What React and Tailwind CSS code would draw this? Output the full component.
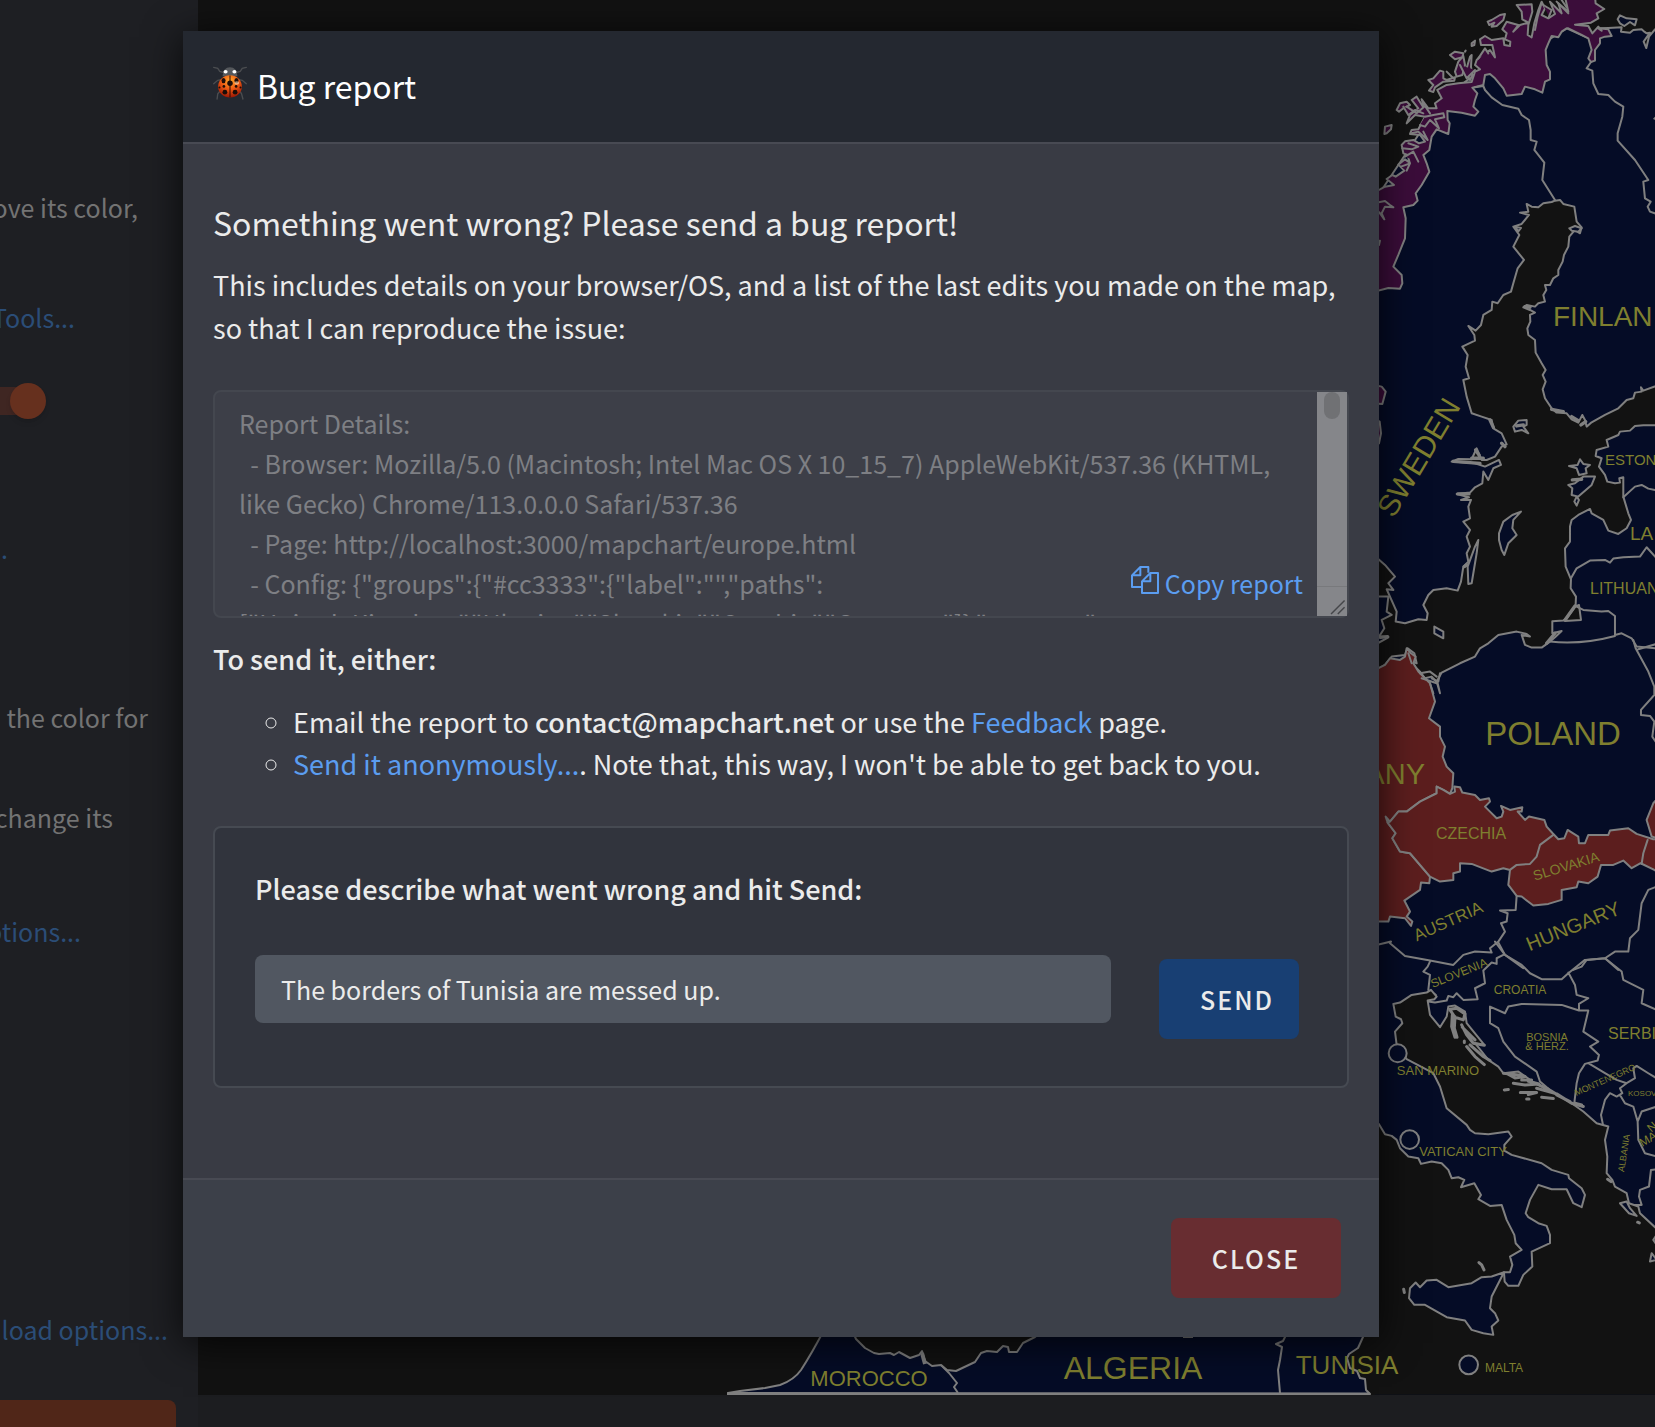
// src/components/BugReportPage.jsx

import React, { useState } from "react";

const report = `Report Details:
  - Browser: Mozilla/5.0 (Macintosh; Intel Mac OS X 10_15_7) AppleWebKit/537.36 (KHTML, like Gecko) Chrome/113.0.0.0 Safari/537.36
  - Page: http://localhost:3000/mapchart/europe.html
  - Config: {"groups":{"#cc3333":{"label":"","paths":
["United_Kingdom","Ukraine","Slovakia","Czechia","Germany"]},"#660066":
{"label":"","paths":["Norway"]}},"title":"","hidden":[],"background":"#242424"}`;

// cx / cy are the centre of the word
const labels = [
  { text: "SWEDEN", cx: 1418, cy: 457, size: 30, rotate: -59 },
  { text: "POLAND", cx: 1553, cy: 733, size: 33 },
  { text: "CZECHIA", cx: 1471, cy: 833, size: 16 },
  { text: "SLOVAKIA", cx: 1566, cy: 866, size: 14, rotate: -17 },
  { text: "AUSTRIA", cx: 1448, cy: 921, size: 17, rotate: -24 },
  { text: "HUNGARY", cx: 1573, cy: 926, size: 20, rotate: -22 },
  { text: "SLOVENIA", cx: 1459, cy: 973, size: 12, rotate: -22 },
  { text: "CROATIA", cx: 1520, cy: 990, size: 12 },
  { text: "BOSNIA", cx: 1547, cy: 1037, size: 11 },
  { text: "& HERZ.", cx: 1547, cy: 1046, size: 11 },
  { text: "SAN MARINO", cx: 1438, cy: 1070, size: 13 },
  { text: "MONTENEGRO", cx: 1605, cy: 1080, size: 9, rotate: -24 },
  { text: "ALBANIA", cx: 1624, cy: 1153, size: 9, rotate: -81 },
  { text: "VATICAN CITY", cx: 1463, cy: 1151, size: 13 },
  { text: "N", cx: 1652, cy: 1127, size: 12, rotate: -40 },
  { text: "MA", cx: 1648, cy: 1139, size: 12, rotate: -30 },
  { text: "MALTA", cx: 1504, cy: 1368, size: 12 },
  { text: "MOROCCO", cx: 869, cy: 1378, size: 22 },
  { text: "ALGERIA", cx: 1133, cy: 1367, size: 32 },
  { text: "TUNISIA", cx: 1347, cy: 1365, size: 26 },
  { text: "FINLAN", cx: 1553, cy: 316, size: 28, anchor: "start" },
  { text: "ESTON", cx: 1605, cy: 460, size: 15, anchor: "start" },
  { text: "LA", cx: 1630, cy: 533, size: 19, anchor: "start" },
  { text: "LITHUAN", cx: 1590, cy: 588, size: 16, anchor: "start" },
  { text: "SERBI", cx: 1608, cy: 1033, size: 16, anchor: "start" },
  { text: "KOSOV", cx: 1628, cy: 1093, size: 8, anchor: "start" },
  { text: "ANY", cx: 1425, cy: 774, size: 29, anchor: "end" },
];

const SEA = "#121212";
const LAND = "#050c26";
const RED = "#5c1e1e";
const PURPLE = "#3b0d3a";

function EuropeMap() {
  return (
    <svg
      viewBox="198 0 1457 1395"
      preserveAspectRatio="xMinYMin slice"
      className="block w-full"
      role="img"
      aria-label="Map of Europe"
    >
      <defs>
        <clipPath id="mainland">
          <rect width="860" height="4185" />
        </clipPath>
      </defs>
      <rect x="198" width="1457" height="1395" fill={SEA} />

      {/* Europe, drawn on a grid three times finer than the page */}
      <g
        transform="translate(1375 0) scale(.3333)"
        clipPath="url(#mainland)"
        stroke="#808080"
        strokeWidth="6"
        strokeLinejoin="round"
        strokeLinecap="round"
        fill="none"
      >
        <path
          fill={LAND}
          d="M-20 873 0 600 200 300 330 200 520 120 575 85 655 120 672 85 700 84 740 82 738 95 765 98 775 90 800 88 808 95 815 100 825 98 806 125 814 144 822 110 840 88 870 84 870 4300-20 4300Z"
        />
        <path
          fill={PURPLE}
          d="M-10 580 15 568 30 560 57 555 35 537 52 525 62 530 88 512 70 494 90 478 104 488 98 465 85 460 80 435 90 424 115 420 132 430 150 425 135 405 105 402 110 390 130 388 150 350 120 345 95 370 105 345 130 325 110 300 125 290 150 330 140 298 160 325 185 325 180 310 200 295 187 270 215 255 250 250 290 246 300 215 315 208 300 195 305 180 320 165 345 150 360 172 352 135 318 135 315 118 330 108 350 120 385 115 388 135 405 138 406 125 390 118 395 100 382 88 395 65 430 75 415 95 435 75 460 68 442 58 440 35 425 15 470 13 472 35 460 75 458 105 470 112 478 70 490 30 500 5 510 25 500 45 520 55 540 42 525 5 560 40 550 10 580 35 570-10 660-10 662 10 688 27 665 40 670 55 648 68 600 74 640 78 652 100 670 80 680 92 670 85 700 88 710 108 690 110 675 115 675 130 660 150 660 182 648 186 640 175 650 150 640 115 620 105 580 85 575 85 560 95 550 112 530 108 520 130 512 150 515 195 525 215 525 238 510 245 502 278 480 268 450 260 440 282 395 287 385 265 360 235 345 222 330 225 325 255 292 263 307 280 300 300 295 320 310 335 300 347 260 338 217 333 218 360 224 370 220 402 185 388 170 410 163 450 145 465 155 490 163 515 140 555 122 580 128 602 115 615 85 622 92 655 90 715 70 765 55 800 80 825 82 850 75 866 40 864-10 877Z"
        />

        {/* fjords and islands of Norway */}
        <g fill={PURPLE}>
          <path d="M338 65 350 60 375 45 390 42 385 60 365 78 350 80 358 68 343 75ZM290 130 300 122 298 135 290 138ZM225 165 240 155 265 160 262 172 240 178ZM240 215 250 185 265 168 270 195 262 225 245 230ZM272 215 285 170 290 165 288 200 292 225 285 240ZM160 240 175 235 195 212 205 215 205 235 215 240 240 232 238 242 205 245 180 262 175 276 162 272 175 255ZM65 330 75 310 95 305 105 315 85 325 72 335ZM28 402 30 380 50 375 48 388 35 400ZM-5 610 30 603 45 615 55 622 30 620 20 640 28 658 15 640-5 620ZM-5 725 15 722 12 735-5 740Z" />
          <path d="M85 320 100 345 120 330 145 340M95 320 125 340 150 318 165 340M150 350 175 345 205 340 208 352 180 358 192 385 165 360 150 380 135 375M110 400 130 395 158 420 145 395M82 445 110 448 130 440 100 430M90 470 115 455 130 485M78 500 105 490 95 512M255 195 275 235 300 210M310 175 330 145 340 160M270 155 272 152M215 215 235 235" />
          <path d="M480 90 488 50 500 8M505 15 530 30 522 50M545 5 580 40M560 0 575 22" />
        </g>
        <path fill={LAND} d="M728 58 735 46 755 55 785 58 780 76 765 66 748 78 735 70Z" />

        {/* Sweden / Finland / Russia borders */}
        <path d="M300 262 325 258 330 270 350 292 382 315 430 326 440 345 462 360 467 390 467 420 485 425 478 450 508 488 502 540 540 600M648 186 635 205 652 212 655 250 670 282 700 285 720 305 745 320 742 350 728 400 728 422 780 480 820 540 805 545 810 595 827 605 818 620 825 635 845 642M845 350 838 356" />

        {/* Baltic sea */}
        <path
          fill={SEA}
          d="M455 612 470 620 490 622 505 610 530 606 540 602 555 600 565 612 598 620 605 665 620 682 615 700 600 690 583 710 580 740 567 765 563 785 550 810 550 825 535 835 525 855 510 855 514 870 505 885 510 905 490 910 480 920 455 915 445 922 465 930 480 938 465 945 466 965 457 985 460 1005 480 1020 482 1058 500 1090 512 1110 503 1125 512 1145 503 1168 510 1195 530 1225 545 1238 575 1240 590 1258 610 1268 622 1245 630 1260 635 1280 650 1267 690 1245 730 1225 755 1200 775 1195 780 1178 800 1175 798 1162 805 1172 870 1148 870 1276 805 1276 780 1278 765 1292 735 1295 730 1305 695 1320 700 1340 665 1350 662 1368 680 1375 672 1400 690 1425 697 1445 720 1450 735 1448 733 1435 745 1432 745 1490 760 1540 768 1560 755 1585 730 1602 700 1592 685 1560 650 1540 645 1527 610 1545 590 1560 585 1580 585 1625 570 1645 572 1700 588 1738 587 1765 603 1790 602 1815 575 1855 565 1862 532 1864 532 1900 560 1893 540 1912 525 1925 500 1943 470 1943 450 1935 440 1905 465 1910 455 1902 425 1895 370 1905 340 1930 315 1945 300 1970 255 1990 200 2018 185 2045 195 2080 188 2050 170 2030 150 2035 135 2015 120 2000 112 1985 125 1990 118 1960 98 1945 90 1965 50 1970 30 1995-10 2018-10 1660 30 1695 60 1730 40 1750 55 1770 35 1768 65 1835 62 1865 90 1870 130 1858 155 1860 158 1840 145 1815 160 1785 175 1770 215 1765 248 1772 258 1745 265 1700 280 1685 275 1660 285 1640 275 1610 285 1590 265 1565 285 1555 280 1520 288 1500 258 1500 282 1492 245 1482 285 1478 300 1462 322 1450 325 1415 340 1440 355 1405 378 1395 372 1380 330 1400 300 1390 230 1385 250 1377 290 1378 305 1345 320 1380 335 1380 360 1370 380 1340 395 1333 380 1300 355 1285 350 1260 320 1250 290 1240 275 1190 265 1140 282 1135 272 1100 278 1065 262 1040 300 1022 298 1005 280 978 302 992 318 975 325 945 350 930 352 905 368 910 385 885 408 875 415 850 428 805 447 780 415 740 433 705 415 680 440 672 462 645 435 638 460 635Z"
        />
        <g fill={LAND}>
          <path d="M583 685 600 678 620 685 610 695 590 692ZM420 680 438 684 430 694ZM372 1600 385 1565 412 1545 438 1535 415 1560 412 1585 425 1605 400 1630 388 1665 380 1650 372 1620ZM415 1280 430 1262 455 1260 455 1275 445 1280 460 1300 440 1290 420 1295ZM582 1398 608 1395 615 1378 625 1392 645 1395 632 1405 635 1420 612 1425 605 1405ZM580 1455 600 1450 625 1430 660 1430 650 1455 610 1490 590 1485 592 1465ZM598 1505 605 1490 612 1500 605 1517ZM310 1620 305 1660 290 1750 280 1752 278 1700 300 1640ZM178 1880 205 1895 205 1915 178 1900ZM-10 1790 40 1790 35 1835 50 1845 20 1860 28 1885 12 1910 40 1912-10 1940Z" />
          <path d="M600 1820 612 1815 618 1860 570 1863Z" fill={SEA} />
        </g>
        <path
          strokeWidth="10"
          d="M235 1384 315 1390M290 1375 325 1375M248 1482 282 1482M345 1260 355 1282M380 1330 390 1340M302 1350 312 1365M425 1278 445 1275M268 1700 275 1695M530 1228 565 1235M590 1250 610 1262M618 1275 632 1265M450 920 465 922M600 1818 570 1860M540 1900 515 1930M592 1440 620 1438M16 1912 38 1910"
        />
        <path fill={PURPLE} d="M-5 1155 20 1160 32 1175 22 1212-5 1210ZM-5 1255 14 1265 18 1300 12 1330-5 1340Z" />

        {/* Baltic states and the north of Poland */}
        <path d="M745 1492 780 1460 800 1455 820 1466 840 1470M588 1735 605 1705 645 1682 690 1680 705 1688 715 1676 745 1672 795 1670 815 1642 845 1675M605 1820 625 1830 680 1835 700 1833 720 1848 720 1905M525 1925Q620 1935 720 1908M720 1905 740 1900 770 1915 785 1940 845 1945" />

        <g transform="translate(0 1920)">
          {/* Germany, Czechia, Slovakia, Ukraine */}
          <path
            fill={RED}
            d="M-10 95 30 75 45 55 75 60 90 50 95 25 108 40 122 50 115 70 130 95 150 115 165 130 180 185 162 235 195 260 195 290 210 320 203 350 215 380 235 400 232 445 225 462 205 450 185 440 185 460 135 485 95 515 70 515 45 545 32 530 38 548 62 580 52 595 75 635 105 640 165 710 163 730 138 728 135 750 88 782 105 815 95 830 112 845 108 858 90 835 45 830 40 845-10 845Z"
          />
          <path
            fill={RED}
            d="M45 545 70 515 95 515 135 485 185 460 185 440 205 450 225 462 240 455 238 440 255 442 262 458 300 465 315 480 342 475 345 485 330 500 345 515 365 535 380 530 385 515 378 498 405 510 442 502 440 515 428 515 450 540 462 530 508 540 515 560 533 580 550 598 568 595 578 570 610 590 612 610 630 610 640 585 700 585 705 572 760 565 785 582 835 598 870 598 870 710 838 690 797 670 770 685 745 662 715 675 678 675 668 710 640 730 610 725 605 742 560 750 560 780 520 792 475 797 440 770 425 768 400 735 405 690 385 685 350 695 290 672 255 670 255 695 235 700 235 720 195 725 165 710 105 640 75 635 52 595 62 580 38 548Z"
          />
          <path fill={RED} d="M870 450 835 490 815 540 830 590 870 600Z" />
          <path d="M535 585 495 615 485 650 465 672 425 675 405 690M818 600 805 640 800 672M165 130 175 160M170 115 190 125 195 100M135 100 165 95 185 110M100 40 110 70M140 115 185 130" />

          {/* Poland east, Austria, Hungary */}
          <path d="M775 0 782 25 820 95 838 140 838 165 798 210 798 225 825 228 838 245 832 290 845 310M790 28 845 12M425 768 422 810 375 812 398 820 395 845 378 850 390 875 370 905 345 925 350 938 300 935 265 945 235 975 165 962 90 948 45 910 48 905 5 915M845 740 820 750 800 790 790 870 765 895 760 935 720 935 690 955 635 960 620 980 595 990M370 908 390 945 445 985M690 955 730 990" />
        </g>

        <g transform="translate(0 2820)">
          {/* Balkans */}
          <path d="M165 65 158 80 145 95 165 105 160 150 182 165M385 45 365 55 365 72 350 68 325 92 330 130 300 145 308 178 265 180 245 160 235 172 220 168 215 182 180 188 160 185M360 5 390 45 440 75 465 100 500 118 560 118 580 100 630 60 690 55 740 95 745 120 805 150 800 190 845 210M580 98 600 135 605 165 640 175 612 192 612 212 575 200 560 195 440 192 400 200 390 220 345 200 345 250 370 265 385 305 420 350 485 395 495 425 530 455M612 212 640 212 625 275 670 305 645 320 672 345 668 362 630 372 612 400 605 430 598 490M640 370 690 400 725 420 755 430 735 445 742 460 725 470 705 460 690 480 678 525 685 560M755 430 780 415 775 385 785 378 820 400 845 415M735 465 750 490 775 500 788 545 790 600 810 640 845 650M788 545 800 515 845 500M845 688 828 690 822 740 795 750 792 770 800 795 765 795" />

          {/* Adriatic and Tyrrhenian */}
          <path
            fill={SEA}
            d="M-10 540 12 553 30 583 50 588 65 600 75 625 100 650 130 655 138 672 170 665 200 670 220 690 230 715 250 712 268 720 258 742 298 730 318 765 310 778 345 798 380 795 395 840 418 885 422 910 440 930 405 950 412 975 405 997 387 997 389 1025 400 1038 430 1038 445 1005 472 980 470 935 525 910 525 885 515 858 490 850 460 832 452 820 465 780 490 735 530 748 575 748 595 790 620 802 630 765 620 745 582 715 580 705 530 690 500 670 410 645 388 632 388 615 410 590 400 575 340 583 300 580 285 570 275 555 215 505 195 440 175 400 95 358 65 315 60 275 82 250 78 238 62 230 55 192 75 188 110 165 155 158 168 150 185 170 178 178 158 182 165 225 195 262 215 230 220 200 240 197 270 215 275 250 328 315 300 310 340 360 370 380 385 400 430 395 480 430 530 455 590 490 625 515 665 550 700 560 690 600 697 650 695 700 712 720 720 740 755 760 762 790 790 800 795 820 840 862 870 885 870 1700-10 1700Z"
          />
          <g fill={LAND}>
            <path d="M102 1075 105 1045 122 1028 135 1042 155 1022 185 1020 220 1042 290 1030 320 1012 350 1010 387 997 350 1070 345 1105 360 1120 370 1142 350 1160 355 1185 325 1180 290 1170 270 1142 215 1132 150 1095 118 1095Z" />
            <path d="M735 790 755 785 765 805 785 828 762 820ZM825 965 830 940 845 960ZM845 885 835 900 845 915" />
            <circle cx="68" cy="340" r="27" />
            <circle cx="104" cy="599" r="28" />
            <circle cx="281" cy="1275" r="28" />
          </g>
          <path
            strokeWidth="9"
            d="M225 210 240 232 265 240 270 222 245 205 225 208M232 225 230 260 240 292M240 230 238 265 246 292M260 255 275 285 295 310 328 316M262 262 300 300M275 320 300 350 328 374M285 315 325 350 345 362M268 303 268 308M385 400 430 405 450 410 420 414 398 402M415 430 450 435 492 432 460 424M436 458 485 458 460 464M388 450 400 449M455 477 462 477M500 472 535 476M485 445 545 462 590 490 625 500M480 430 520 448 570 478M600 490 620 495M545 465 585 485M440 420 470 420M312 968 320 975 327 990M86 1048 88 1058M788 847 793 849M698 718 708 725"
          />
        </g>
      </g>

      {/* North Africa */}
      <g stroke="#808080" strokeWidth="2" fill="none" strokeLinejoin="round">
        <path
          fill={LAND}
          d="M728 1393 740 1391 765 1388 780 1385Q794 1380 801 1370 812 1353 824 1330L852 1330 856 1339 865 1348 874 1353 879 1354 890 1353 894 1355 899 1352 910 1358 919 1355 922 1351 925 1361 932 1366 941 1365 947 1370 956 1371 975 1362 981 1353 987 1351 997 1352 1003 1346 1008 1347 1009 1352 1017 1352 1023 1343 1035 1337 1050 1325 1366 1325 1363 1337 1358 1348 1349 1354 1347 1358 1350 1368 1357 1371 1360 1378 1365 1379 1366 1390 1370 1394Z"
        />
        <path d="M941 1365 949 1373 957 1383 954 1387 958 1393M1286 1335 1283 1341 1276 1344 1282 1347 1280 1360 1278 1370 1280 1393M1183 1337h10" />
        <path strokeWidth="3" d="M727 1394H1370" />
        <path strokeWidth="4" d="M922 1353 925 1364" />
      </g>

      <g fill="#7f7f2f" fontFamily="Liberation Sans, Arial, sans-serif">
        {labels.map(({ text, cx, cy, size, rotate = 0, anchor = "middle" }) => (
          <text
            key={text}
            transform={`translate(${cx} ${cy}) rotate(${rotate})`}
            y={Math.round(size * 0.36)}
            fontSize={size}
            textAnchor={anchor}
          >
            {text}
          </text>
        ))}
      </g>
    </svg>
  );
}

function Sidebar() {
  return (
    <aside className="w-[198px] shrink-0 overflow-hidden bg-[#1e1f23] pt-[187px] text-[25px] leading-10 whitespace-nowrap text-[#737373]">
      <p className="flex justify-end pr-[60px]">ove its color,</p>
      <p className="mt-[70px] flex justify-end pr-[123px]">
        <a href="#tools" className="text-[#2b4d77]">Tools...</a>
      </p>
      <label className="mt-[46px] flex h-9 w-[46px] items-center">
        <input type="checkbox" defaultChecked className="peer sr-only" aria-label="Map option" />
        <span className="h-7 flex-1 bg-[#3f2622]" />
        <span className="-ml-4 size-9 rounded-full bg-[#66301e] shadow-md" />
      </label>
      <p className="mt-[109px] flex justify-end pr-[190px]">
        <a href="#more" className="text-[#2b4d77]">.</a>
      </p>
      <p className="mt-[129px] flex justify-end pr-[50px]">the color for</p>
      <p className="mt-[60px] flex justify-end pr-[85px]">change its</p>
      <p className="mt-[74px] flex justify-end pr-[117px]">
        <a href="#options" className="text-[#2b4d77]">ptions...</a>
      </p>
      <p className="mt-[358px] flex justify-end pr-[30px]">
        <a href="#download" className="text-[#2b4d77]">load options...</a>
      </p>
      <button type="button" aria-label="Download map" className="mt-[51px] block h-[60px] w-[176px] rounded-tr-lg bg-[#502618]" />
    </aside>
  );
}

function Ladybug() {
  return (
    <svg viewBox="0 0 100 100" className="mb-1 size-[34px]" aria-hidden="true">
      <defs>
        <radialGradient id="shell" cx=".5" cy=".25" r=".8">
          <stop offset="0" stopColor="#ffab2e" />
          <stop offset=".45" stopColor="#ef5a12" />
          <stop offset="1" stopColor="#8e0d03" />
        </radialGradient>
      </defs>
      <g stroke="#4b4d50" strokeWidth="4" fill="none" strokeLinecap="round">
        <path d="M34 20 20 16 14 7 2 4M66 20 80 16 86 7 98 4M24 40 14 42 2 52M76 40 86 42 98 52M22 72 14 82 12 97M78 72 84 82 88 97" />
      </g>
      <path d="M28 30Q30 4 50 4T72 30Z" fill="#55585c" />
      <ellipse cx="37" cy="17" rx="6" ry="5" fill="#fff" />
      <ellipse cx="63" cy="17" rx="6" ry="5" fill="#fff" />
      <ellipse cx="50" cy="60" rx="35" ry="33" fill="url(#shell)" />
      <path d="M50 28V92" stroke="#2a0a04" strokeWidth="3" />
      <g fill="#1d0d08">
        <circle cx="50" cy="51" r="8" />
        <ellipse cx="31" cy="43" rx="6" ry="8" />
        <ellipse cx="69" cy="43" rx="6" ry="8" />
        <circle cx="32" cy="60" r="4" />
        <circle cx="68" cy="60" r="4" />
        <circle cx="35" cy="77" r="7" />
        <circle cx="65" cy="77" r="7" />
        <circle cx="19" cy="63" r="3" />
        <circle cx="81" cy="63" r="3" />
      </g>
      <ellipse cx="70" cy="50" rx="7" ry="5" fill="#ffe6c0" opacity=".6" />
    </svg>
  );
}

function CopyIcon() {
  return (
    <svg viewBox="0 0 84 84" className="mb-1.5 size-7" fill="none" stroke="currentColor" strokeWidth="6" strokeLinejoin="round" aria-hidden="true">
      <path d="M33 63H3V28L28 3H52V20M28 3V28H3" />
      <path d="M81 21V81H33V46L58 21ZM58 21V46H33" />
    </svg>
  );
}

export default function App() {
  const [message, setMessage] = useState("The borders of Tunisia are messed up.");

  const handleSend = (e) => {
    e.preventDefault();
    setMessage("");
  };

  return (
    <div className="relative h-screen overflow-hidden bg-[#1c1d20] font-['Noto_Sans_CJK_SC','Noto_Sans',sans-serif]">
      {/* Page behind the dialog */}
      <div className="flex h-full">
        <Sidebar />
        <main className="min-w-0 flex-1">
          <EuropeMap />
        </main>
      </div>

      {/* Dialog */}
      <div className="absolute inset-0 flex items-start pt-[31px] pr-[276px] pl-[183px]">
        <section
          role="dialog"
          aria-labelledby="dialog-title"
          className="min-w-0 flex-1 bg-[#393b44] text-[27px] leading-[42px] text-[#ebebeb] shadow-[0_6px_36px_rgba(0,0,0,0.75)]"
        >
          <header className="flex h-[113px] items-center gap-2.5 border-b-2 border-[#484a53] bg-[#242830] px-[30px] pb-1 text-white">
            <Ladybug />
            <h1 id="dialog-title" className="text-[32px]">Bug report</h1>
          </header>

          <div className="px-[30px] pt-[57px] pb-[90px]">
            <h2 className="text-[32px]">Something went wrong? Please send a bug report!</h2>
            <p className="mt-5 leading-[43px]">
              This includes details on your browser/OS, and a list of the last edits you made on the map, so that I can reproduce the issue:
            </p>

            <div className="relative mt-[41px]">
              <textarea
                readOnly
                value={report}
                aria-label="Report details"
                className="block h-[228px] w-full resize-none overflow-hidden rounded-lg border-2 border-[#44474f] bg-[#3d3f48] py-[11px] pr-[60px] pl-6 text-[25px] leading-10 text-[#7e7f84] outline-none"
              />
              <button type="button" className="absolute right-[46px] bottom-[14px] flex items-center gap-1.5 text-[25px] text-[#5b9df0]">
                <CopyIcon />
                Copy report
              </button>
              {/* Scroll track */}
              <div className="absolute inset-y-0.5 right-0.5 flex w-[30px] flex-col items-center justify-between bg-[#85868a]">
                <span className="h-[27px] w-4 rounded-full bg-[#707174]" />
                <svg viewBox="0 0 30 30" className="size-[30px] border-t border-[#78797c]" stroke="#45464a" strokeWidth="1.5" aria-hidden="true">
                  <path d="M14 28 28 14M21 28 28 21" />
                </svg>
              </div>
            </div>

            <p className="mt-5 font-medium">To send it, either:</p>
            <ul className="mt-[21px] list-[circle] pl-20">
              <li>
                Email the report to <b className="font-medium">contact@mapchart.net</b> or use the{" "}
                <a href="#feedback" className="text-[#5b9df0]">Feedback</a> page.
              </li>
              <li>
                <a href="#anonymous" className="text-[#5b9df0]">Send it anonymously...</a>. Note that, this way, I won't be able to get back to you.
              </li>
            </ul>

            <form onSubmit={handleSend} className="mt-[41px] rounded-lg border-2 border-[#464a52] bg-[#31343d] px-10 pt-10 pb-[47px]">
              <label htmlFor="message" className="block font-medium">
                Please describe what went wrong and hit Send:
              </label>
              <div className="mt-[45px] flex items-start pr-2">
                <input
                  id="message"
                  type="text"
                  value={message}
                  onChange={(e) => setMessage(e.target.value)}
                  className="h-[68px] min-w-0 flex-1 rounded-lg bg-[#515761] px-[26px] text-[25px] outline-none"
                />
                <button type="submit" className="mt-1 ml-12 h-20 w-[140px] rounded-lg bg-[#183f73] pl-4 text-[25px] font-medium tracking-[2px]">
                  SEND
                </button>
              </div>
            </form>
          </div>

          <footer className="flex justify-end border-t-2 border-[#484a53] bg-[#3c4049] px-[38px] pt-[38px] pb-[39px]">
            <button type="button" className="h-20 w-[170px] rounded-lg bg-[#682d31] text-[25px] font-medium tracking-[2px]">
              CLOSE
            </button>
          </footer>
        </section>
      </div>
    </div>
  );
}
